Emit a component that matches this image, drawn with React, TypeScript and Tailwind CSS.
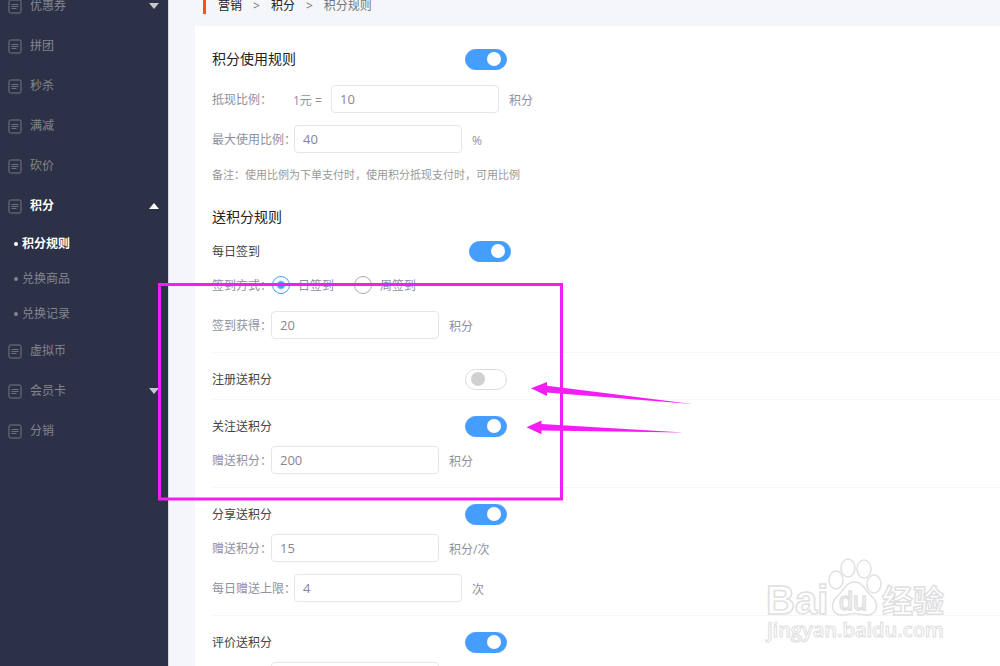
import React, { useState } from 'react';
import clsx from 'clsx';

type MenuItem = {
  name: string;
  open?: boolean;
  hasChildren?: boolean;
  children?: string[];
};

const menu: MenuItem[] = [
  { name: '优惠券', hasChildren: true },
  { name: '拼团' },
  { name: '秒杀' },
  { name: '满减' },
  { name: '砍价' },
  { name: '积分', hasChildren: true, open: true, children: ['积分规则', '兑换商品', '兑换记录'] },
  { name: '虚拟币' },
  { name: '会员卡', hasChildren: true },
  { name: '分销' },
];

const DocIcon = () => (
  <svg width="14" height="15" viewBox="0 0 14 15" fill="none" stroke="#747885" className="shrink-0">
    <rect x="1" y="1" width="12" height="13" rx="1.5" />
    <path d="M3.5 5.5h7M3.5 7.5h7M3.5 9.5h5" strokeWidth="0.9" />
  </svg>
);

const Caret = ({ up }: { up?: boolean }) => (
  <svg width="10" height="6" viewBox="0 0 10 6" className={clsx('ml-auto', up ? 'text-white' : 'text-[#c5c7cd]')}>
    <path d={up ? 'M0 6L5 0l5 6z' : 'M0 0h10L5 6z'} fill="currentColor" />
  </svg>
);

const Sidebar = () => (
  <nav className="w-[169px] shrink-0 overflow-hidden border-r border-[#d5d7de] bg-[#2c3147] text-xs text-[#83868f]">
    <ul className="-mt-3.5">
      {menu.map((item) => (
        <li key={item.name}>
          <a href="#" className={clsx('flex h-10 items-center gap-2 pr-[9px] pl-2', item.open && 'font-bold text-white')}>
            <DocIcon />
            <span>{item.name}</span>
            {item.hasChildren && <Caret up={item.open} />}
          </a>
          {item.children && (
            <ul>
              {item.children.map((child, i) => (
                <li key={child}>
                  <a href="#" className={clsx('flex h-[35px] items-center gap-1 pl-3.5', i === 0 && 'font-bold text-white')}>
                    <span className="size-1 rounded-full bg-current"></span>
                    <span>{child}</span>
                  </a>
                </li>
              ))}
            </ul>
          )}
        </li>
      ))}
    </ul>
  </nav>
);

const Toggle = ({ label, defaultOn = true }: { label: string; defaultOn?: boolean }) => {
  const [on, setOn] = useState(defaultOn);
  return (
    <button
      type="button"
      role="switch"
      aria-checked={on}
      aria-label={label}
      onClick={() => setOn(!on)}
      className={clsx(
        'flex h-[21px] w-[42px] items-center rounded-full border px-[5px]',
        on ? 'justify-end border-[#459dfd] bg-[#459dfd]' : 'justify-start border-[#dcdcdc] bg-white'
      )}
    >
      <span className={clsx('size-3.5 rounded-full', on ? 'bg-white' : 'bg-[#d0d0d0]')}></span>
    </button>
  );
};

const Header = ({ title, big, wide, on }: { title: string; big?: boolean; wide?: boolean; on?: boolean }) => (
  <div className="flex h-[34px] items-center">
    <h3 className={clsx(wide ? 'w-[257px]' : 'w-[253px]', big ? 'text-sm text-[#222]' : 'pt-0.5 text-xs text-[#444]')}>{title}</h3>
    <Toggle label={title} defaultOn={on} />
  </div>
);

type FieldProps = {
  id: string;
  label: string;
  value: string;
  unit: string;
  prefix?: string;
  long?: boolean;
};

const Field = ({ id, label, value, unit, prefix, long }: FieldProps) => (
  <div className="flex h-[34px] items-center text-xs whitespace-nowrap text-[#8e90a0]">
    <label htmlFor={id} className={clsx('pt-0.5', prefix ? 'w-[81px]' : long ? 'w-[82px]' : 'w-[59px]')}>
      {label}
    </label>
    {prefix && <span className="w-[38px] pt-1">{prefix}</span>}
    <input
      id={id}
      type="text"
      defaultValue={value}
      className="h-7 w-[168px] rounded border border-[#e6e6e8] bg-white px-2 text-[13px] text-[#85878f] outline-none"
    />
    <span className="ml-2.5 pt-1">{unit}</span>
  </div>
);

const Section = ({ children }: { children: React.ReactNode }) => (
  <section className="border-b border-[#f6f6f8] pt-[9px] pb-2.5">{children}</section>
);

const Radio = ({ label, checked }: { label: string; checked?: boolean }) => (
  <label className="flex items-center gap-2">
    <input
      type="radio"
      name="sign-mode"
      defaultChecked={checked}
      className="size-[18px] appearance-none rounded-full border border-[#aaa] bg-white checked:border-[#459dfd] checked:bg-[radial-gradient(circle,#459dfd_3px,#fff_5px)]"
    />
    <span className="pt-0.5">{label}</span>
  </label>
);

const Breadcrumb = () => (
  <div className="flex h-[26px] items-start pl-2">
    <div className="-mt-0.5 flex h-4 items-center gap-[11px] border-l-3 border-[#fb5119] pl-3 text-xs text-[#777]">
      <a href="#" className="text-[#222]">营销</a>
      <span>&gt;</span>
      <a href="#" className="text-[#222]">积分</a>
      <span>&gt;</span>
      <span>积分规则</span>
    </div>
  </div>
);

// Highlight frame and pointers over the form
const Annotation = () => (
  <svg className="pointer-events-none absolute top-[283px] left-[158px]" width="536" height="218" viewBox="0 0 536 218">
    <rect x="1.5" y="1.5" width="402" height="214.5" fill="none" stroke="#f41df4" strokeWidth="3" />
    <g fill="#f41df4">
      <path d="M373 105.3L389 99v3.7L534 121 389 109.5v3.5z" />
      <path d="M368.5 144.3L383.5 137.500v3.500L526 149.500 383.5 147.500v3.800z" />
    </g>
  </svg>
);

const Watermark = () => (
  <svg
    className="pointer-events-none absolute right-[50px] bottom-[18px]"
    width="186"
    height="92"
    viewBox="0 0 186 92"
    fill="#fff"
    stroke="#e0e0e0"
    strokeWidth="1.5"
  >
    <g className="font-['Liberation_Sans','Noto_Sans_CJK_SC',sans-serif] font-bold">
      <text x="2" y="58" fontSize="40">Bai</text>
      <text x="118" y="56" fontSize="31">经验</text>
    </g>
    <ellipse cx="72" cy="24" rx="7" ry="9" />
    <ellipse cx="84" cy="12" rx="7" ry="9" />
    <ellipse cx="100" cy="13" rx="7" ry="9" />
    <ellipse cx="110" cy="28" rx="7" ry="9" />
    <path d="M90.5 26c-8 0-10 7-15 12-4 4-7 7-7 12 0 6 4 9 10 9 5 0 8-1.500 12-1.500s7 1.500 12 1.500c6 0 10-3 10-9 0-5-3-8-7-12-5-5-7-12-15-12z" />
    <text x="75" y="54" fontSize="25" className="font-['Liberation_Sans',sans-serif]">du</text>
    <text x="3" y="81" fontSize="20" className="font-['Open_Sans',sans-serif] font-semibold" strokeWidth="1">jingyan.baidu.com</text>
  </svg>
);

const App = () => (
  <div className="relative flex h-screen overflow-hidden bg-[#f5f6fa] font-['Open_Sans','Noto_Sans_CJK_SC',sans-serif]">
    <Sidebar />
    <main className="min-w-0 flex-1 pl-[26px]">
      <Breadcrumb />
      <form className="bg-white pt-4 pl-[17px]">
        <div className="flex flex-col gap-1.5">
          <Header title="积分使用规则" big />
          <Field id="cash-rate" label="抵现比例：" prefix="1元 =" value="10" unit="积分" />
          <Field id="max-rate" label="最大使用比例：" value="40" unit="%" long />
        </div>
        <p className="mt-1 h-8 text-[11px] leading-[30px] text-[#999]">备注：使用比例为下单支付时，使用积分抵现支付时，可用比例</p>
        <h3 className="mt-2 h-[34px] text-sm leading-[34px] text-[#222]">送积分规则</h3>

        <div className="border-b border-[#f6f6f8] pb-2.5">
          <Header title="每日签到" wide />
          <fieldset className="mb-1.5 flex h-[34px] items-center text-xs text-[#8e90a0]">
            <span className="w-[60px] pt-0.5 whitespace-nowrap">签到方式：</span>
            <div className="flex gap-5">
              <Radio label="日签到" checked />
              <Radio label="周签到" />
            </div>
          </fieldset>
          <Field id="sign-points" label="签到获得：" value="20" unit="积分" />
        </div>

        <div className="border-b border-[#f6f6f8] pt-[9px] pb-[3px]">
          <Header title="注册送积分" on={false} />
        </div>

        <Section>
          <Header title="关注送积分" />
          <Field id="follow-points" label="赠送积分：" value="200" unit="积分" />
        </Section>

        <Section>
          <Header title="分享送积分" />
          <div className="flex flex-col gap-1.5">
            <Field id="share-points" label="赠送积分：" value="15" unit="积分/次" />
            <Field id="share-limit" label="每日赠送上限：" value="4" unit="次" long />
          </div>
        </Section>

        <Section>
          <Header title="评价送积分" />
          <Field id="review-points" label="赠送积分：" value="10" unit="积分" />
        </Section>
      </form>
    </main>
    <Annotation />
    <Watermark />
  </div>
);

export default App;
